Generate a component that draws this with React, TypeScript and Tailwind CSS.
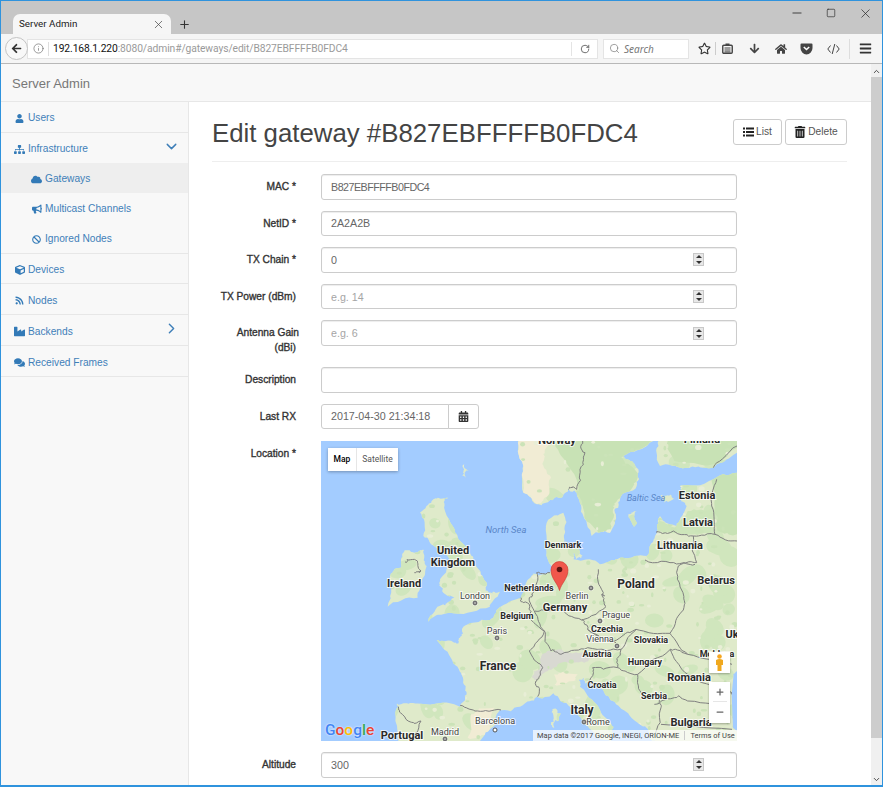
import React from 'react';
import { FaUser, FaSitemap, FaCloud, FaBullhorn, FaBan, FaCube, FaRss, FaIndustry, FaComments, FaTrashAlt, FaCalendarAlt, FaArrowLeft, FaRegStar, FaArrowDown, FaHome, FaBars } from 'react-icons/fa';
import { ChevronDown, ChevronRight, Info, RotateCw, Search, X, Plus, Minus, Square, ChevronUp } from 'lucide-react';

const sans = "font-['Liberation_Sans',Arial,sans-serif]";

function NavItem({ icon, label, chevron, sub, active, short }: { icon: React.ReactNode; label: string; chevron?: React.ReactNode; sub?: boolean; active?: boolean; short?: boolean }) {
  return (
    <div className={`flex items-center pt-[2px] text-[10.2px] text-[#3f7fb8] ${short ? 'h-[29px]' : 'h-[30px]'} ${sub ? 'pl-[30px]' : 'pl-[13px]'} ${active ? 'bg-[#eeeeee]' : ''}`}>
      <span className="mr-[3px] flex w-[11px] justify-center text-[#337ab7]">{icon}</span>
      <span>{label}</span>
      {chevron && <span className="ml-auto mr-[8px] -mt-[6px]">{chevron}</span>}
    </div>
  );
}

function Spinner() {
  return (
    <div className="mr-[32px] flex h-[13px] w-[11px] shrink-0 flex-col justify-between border border-[#c8c8c8] bg-[#e8e8e8]">
      <div className="flex h-[5px] items-center justify-center"><div className="h-0 w-0 border-x-[3px] border-b-[3px] border-x-transparent border-b-[#333]" /></div>
      <div className="flex h-[5px] items-center justify-center"><div className="h-0 w-0 border-x-[3px] border-t-[3px] border-x-transparent border-t-[#333]" /></div>
    </div>
  );
}

function Row({ label, second, wide, children }: { label: string; second?: string; wide?: boolean; children: React.ReactNode }) {
  return (
    <div className={`flex ${wide ? 'mb-[12px]' : 'mb-[11px]'} ${second ? 'h-[35.6px]' : 'min-h-[25.6px]'}`}>
      <label className="mr-[25px] w-[84px] shrink-0 pt-[5px] text-right text-[10.2px] leading-[15px] text-[#333] [-webkit-text-stroke:0.35px_#333]">
        <span className={`block whitespace-nowrap ${second ? '-mr-[3px]' : ''}`}>{label}</span>
        {second && <span className="block">{second}</span>}
      </label>
      {children}
    </div>
  );
}

function Field({ value, placeholder, spin, tight }: { value?: string; placeholder?: string; spin?: boolean; tight?: boolean }) {
  return (
    <div className="flex h-[25.6px] w-[416px] items-center rounded-[3px] border border-[#cccccc] bg-white pl-[9px] shadow-[inset_0_1px_1px_rgba(0,0,0,0.075)]">
      <input readOnly value={value ?? ''} placeholder={placeholder} className={`min-w-0 flex-1 bg-transparent text-[10.7px] text-[#666] outline-none placeholder:text-[#a5a5a5] ${tight ? 'tracking-[-0.5px]' : ''}`} />
      {spin && <Spinner />}
    </div>
  );
}

const labels: [string, number, number, number, boolean][] = [
  ['Norway', 236, 3, 11, true], ['Finland', 381, 2, 11, true],
  ['Estonia', 376, 58, 11, true], ['Latvia', 377, 85, 11, true], ['Lithuania', 359, 108, 11, true],
  ['Denmark', 242, 107, 9, true], ['United', 132, 113, 11, true], ['Kingdom', 132, 125, 11, true],
  ['Ireland', 83, 146, 11, true], ['Netherlands', 208, 150, 9, true], ['Poland', 315, 147, 12, true],
  ['Belarus', 395, 143, 11, true], ['London', 154, 158, 9, false], ['Berlin', 256, 158, 9, false],
  ['Germany', 244, 170, 11, true], ['Prague', 295, 177, 9, false], ['Belgium', 196, 178, 9, true],
  ['Czechia', 286, 191, 9, true], ['Paris', 176, 193, 9, false], ['Vienna', 279, 201, 9, false],
  ['Slovakia', 330, 202, 9, true], ['Uk', 411, 197, 11, true], ['Moldova', 396, 216, 9, true], ['Austria', 276, 216, 9, true],
  ['Hungary', 324, 224, 9, true], ['France', 177, 229, 12, true], ['Romania', 368, 240, 11, true],
  ['Croatia', 281, 247, 9, true], ['Serbia', 333, 258, 9, true], ['Italy', 261, 273, 12, true],
  ['Barcelona', 174, 283, 9, false], ['Bulgaria', 370, 285, 11, true], ['Rome', 277, 284, 9, false],
  ['Madrid', 124, 294, 9, false], ['Portugal', 81, 298, 11, true],
];

const dots: [number, number][] = [[154, 162], [270, 147], [176, 197], [279, 180], [296, 205], [263, 281], [124, 298]];

function makeRand(seed: number) {
  let s = seed;
  return () => {
    s = (s * 16807) % 2147483647;
    return s / 2147483647;
  };
}

// Adds small irregularities between the traced points, so coasts and borders look natural.
function rough(points: string, seed: number, amp: number, closed: boolean) {
  const rand = makeRand(seed);
  let pts = points.trim().split(/\s+/).map((p) => p.split(',').map(Number));
  let a = amp;
  for (let round = 0; round < 3; round++) {
    const next: number[][] = [];
    for (let i = 0; i < pts.length; i++) {
      const p = pts[i];
      next.push(p);
      const q = pts[i + 1] ?? (closed ? pts[0] : null);
      if (q) {
        const onEdge = (p[0] === q[0] && (p[0] === 0 || p[0] === 1248)) || (p[1] === q[1] && (p[1] === 0 || p[1] === 900));
        next.push(onEdge ? [(p[0] + q[0]) / 2, (p[1] + q[1]) / 2] : [(p[0] + q[0]) / 2 + (rand() - 0.5) * a, (p[1] + q[1]) / 2 + (rand() - 0.5) * a]);
      }
    }
    pts = next;
    a *= 0.55;
  }
  return pts.map((p) => p.map((n) => n.toFixed(1)).join(',')).join(' ');
}

const landShapes = [
  '232,797 240,790 300,788 417,797 437,757 427,717 397,667 347,597 400,605 417,590 427,557 507,537 527,507 600,470 637,400 687,395 677,335 677,245 727,215 732,275 742,315 757,355 837,370 897,350 977,345 1002,285 1017,225 1067,255 1097,195 1077,160 1077,135 1177,115 1248,95 1248,900 1000,900 985,885 950,845 885,790 850,755 797,725 787,712 777,737 837,807 877,857 870,900 830,890 787,845 737,787 697,757 647,767 597,797 537,807 517,857 477,900 232,900',
  '592,0 607,75 607,155 647,190 697,175 742,145 767,150 787,225 812,285 867,275 882,215 897,175 947,135 952,85 907,45 997,0',
  '1012,0 1017,75 1097,80 1177,80 1248,35 1248,0',
  '932,215 948,210 945,240 935,260 930,240',
  '755,320 775,315 785,345 765,355 750,340',
  '1020,165 1050,160 1060,175 1030,185',
  '430,70 445,90 435,110 428,90',
  '337,175 382,170 372,210 412,295 457,355 497,425 507,455 537,452 507,497 397,517 322,542 367,490 400,470 367,455 357,415 387,355 330,310 307,285 297,215',
  '250,330 280,335 307,335 317,375 297,435 290,470 200,497 207,405 240,380',
  '695,815 710,810 712,840 700,860 690,845',
].map((s, i) => rough(s, 101 + i * 37, 18, true));

const borders = [
  '785,0 792,35 777,85 767,145 742,145',
  '1248,15 1177,80',
  '1187,115 1172,195 1182,280 1248,300',
  '1007,275 1057,270 1117,285 1182,280',
  '1117,285 1127,365 1072,375',
  '972,357 1047,365 1122,370',
  '1072,375 1082,447 1087,507 1047,577 1100,640 1233,670',
  '832,385 847,455 842,460 855,497 782,537 800,565 880,600 945,565 1047,577',
  '687,395 647,395 637,455 625,470 640,510 670,570 625,630 665,680 645,720 650,767',
  '600,470 625,490 620,530 670,570',
  '640,510 720,500 782,537',
  '670,570 690,630 720,640 800,620 900,625 945,565',
  '800,565 885,605',
  '900,625 890,680 815,680 800,725',
  '890,680 950,700 1048,625 1100,640',
  '950,700 970,770 1010,760 1020,800 1000,880',
  '1048,625 1100,700 1220,750 1233,760',
  '1000,790 1060,770 1100,780 1220,780',
  '1020,850 1233,865',
  '417,795 470,810 540,807',
  '232,797 255,835 300,840 270,900',
  '252,363 280,355 300,390 280,395',
].map((s, i) => rough(s, 501 + i * 53, 16, false));

function blobs(count: number, seed: number, rMin: number, rMax: number) {
  const rand = makeRand(seed);
  const out: { x: number; y: number; rx: number; ry: number; a: number }[] = [];
  for (let i = 0; i < count; i++) {
    out.push({ x: rand() * 1248, y: rand() * 900, rx: rMin + rand() * (rMax - rMin), ry: rMin + rand() * (rMax - rMin) * 0.7, a: rand() * 180 });
  }
  return out;
}

const greenBig = blobs(130, 7919, 14, 42);
const greenSmall = blobs(360, 104729, 3, 10);
const paleSmall = blobs(150, 1299709, 3, 10);

const patches: [string, string][] = [
  ['#c8e2b5', '610,0 700,0 760,100 790,230 830,280 870,260 880,200 900,170 940,130 945,90 900,50 990,0'],
  ['#c8e2b5', '1040,0 1060,60 1177,70 1248,20 1248,0'],
  ['#c8e2b5', '1170,110 1248,95 1248,280 1190,270 1180,190'],
  ['#cde5ba', '1015,235 1060,260 1100,210 1170,200 1170,270 1120,280 1010,270'],
  ['#f1ecd4', '592,0 607,75 607,155 647,190 675,170 690,110 670,50 690,0'],
  ['#d9d9d2', '660,650 720,625 810,640 790,665 720,665 680,690 650,720 640,690'],
  ['#f1ecd4', '450,820 520,800 500,880 440,890'],
  ['#f1ecd4', '700,700 770,700 760,720 700,730'],
];

function EuropeMap() {
  return (
    <svg viewBox="0 0 416 300" className="absolute inset-0 h-full w-full">
      <defs>
        <clipPath id="land">
          {landShapes.map((p) => <polygon key={p} points={p} transform="scale(0.33333)" />)}
        </clipPath>
      </defs>
      <rect width="416" height="300" fill="#a3ccff" />
      <g transform="scale(0.33333)">
        {landShapes.map((p) => <polygon key={p} points={p} fill="#dfeaca" />)}
      </g>
      <g clipPath="url(#land)">
        <g transform="scale(0.33333)">
          {greenBig.map((b, i) => <ellipse key={i} cx={b.x} cy={b.y} rx={b.rx} ry={b.ry} transform={`rotate(${b.a} ${b.x} ${b.y})`} fill="#d0e6bd" />)}
          {patches.map(([c, p]) => <polygon key={p} points={rough(p, 313, 22, true)} fill={c} />)}
          {greenSmall.map((b, i) => <ellipse key={i} cx={b.x} cy={b.y} rx={b.rx} ry={b.ry} fill="#cbe3b8" />)}
          {paleSmall.map((b, i) => <ellipse key={i} cx={b.x} cy={b.y} rx={b.rx} ry={b.ry} fill="#e8eed6" />)}
          <polygon points="1248,690 1238,700 1232,760 1236,860 1248,870" fill="#a3ccff" />
        </g>
      </g>
      <g transform="scale(0.33333)">
        {borders.map((b) => (
          <polyline key={b} points={b} fill="none" stroke="#808080" strokeWidth="3" />
        ))}
      </g>
      <text x="185" y="92" textAnchor="middle" fontSize="9.5" fontStyle="italic" fill="#5a86c8" fontFamily="Roboto, sans-serif">North Sea</text>
      <text x="325" y="60" textAnchor="middle" fontSize="9" fontStyle="italic" fill="#5a86c8" fontFamily="Roboto, sans-serif">Baltic Sea</text>
      {labels.map(([t, x, y, s, b]) => (
        <text key={t} x={x} y={y} textAnchor="middle" fontSize={s} fontWeight={b ? 700 : 400} fill={b ? '#2a2a2a' : '#444'} fontFamily="Roboto, sans-serif" stroke="#ffffff" strokeWidth="2" strokeOpacity="0.75" paintOrder="stroke">{t}</text>
      ))}
      {dots.map(([x, y]) => (
        <g key={`${x}-${y}`}>
          <circle cx={x} cy={y} r="2.6" fill="#fff" />
          <circle cx={x} cy={y} r="1.9" fill="none" stroke="#333" strokeWidth="0.9" />
          <circle cx={x} cy={y} r="0.8" fill="#333" />
        </g>
      ))}
      <circle cx="174" cy="289" r="2" fill="#fff" stroke="#444" strokeWidth="0.9" />
      <path d="M238.5 149.5 C236.5 142 230 137.5 230 129 A8.4 8.4 0 0 1 247 129 C247 137.5 240.5 142 238.5 149.5 Z" fill="#f0574c" stroke="#c9352b" strokeWidth="0.6" />
      <circle cx="238.5" cy="128.5" r="2.8" fill="#5e1512" />
    </svg>
  );
}

export default function App() {
  return (
    <div className={`${sans} flex h-[787px] w-[883px] flex-col overflow-hidden border border-b-2 border-[#2f93dd] bg-white`}>
      {/* title bar */}
      <div className="flex h-[33px] shrink-0 bg-[#c6c6c6]">
        <div className="ml-[12px] mt-[13px] flex h-[21px] w-[158px] items-center justify-between rounded-t-[7px] bg-[#f6f6f6] pl-[6px] pr-[6px]">
          <span className="font-['Roboto',sans-serif] text-[9.8px] text-[#222]">Server Admin</span>
          <X size={13} strokeWidth={1.3} className="text-[#444]" />
        </div>
        <Plus size={13} strokeWidth={2} className="ml-[7px] mt-[17px] text-[#333]" />
        <div className="ml-auto flex h-[24px] items-center text-[#222]">
          <Minus size={14} strokeWidth={1.4} />
          <Square size={10} strokeWidth={1.5} className="ml-[22px]" />
          <X size={15} strokeWidth={1.1} className="ml-[22px] mr-[9px]" />
        </div>
      </div>
      {/* toolbar */}
      <div className="flex h-[30px] shrink-0 items-center border-b border-[#b8b8b8] bg-[#f5f5f5] text-[#444]">
        <div className="z-10 ml-[4px] flex h-[23px] w-[23px] items-center justify-center rounded-full border border-[#c4c4c4] bg-[#f8f8f8]">
          <FaArrowLeft size={11} className="text-[#333]" />
        </div>
        <div className="-ml-[1px] flex h-[20px] w-[571px] items-center border border-[#e4e4e4] bg-white">
          <Info size={11} strokeWidth={1.4} className="ml-[5px] text-[#666]" />
          <div className="ml-[4px] h-[14px] w-px bg-[#ddd]" />
          <span className="ml-[4px] pt-[1px] font-['Roboto',sans-serif] text-[10.3px] tracking-[-0.1px] text-[#9a9a9a]"><span className="text-[#111]">192.168.1.220</span>:8080/admin#/gateways/edit/B827EBFFFFB0FDC4</span>
          <div className="ml-auto h-[14px] w-px bg-[#e4e4e4]" />
          <RotateCw size={10} strokeWidth={2} className="ml-[8px] mr-[7px] text-[#555]" />
        </div>
        <div className="ml-[5px] flex h-[20px] w-[86px] items-center border border-[#e4e4e4] bg-white">
          <Search size={11} strokeWidth={1.5} className="ml-[5px] text-[#777]" />
          <span className="ml-[4px] pt-[1px] font-['Noto_Sans',sans-serif] text-[10px] italic text-[#777]">Search</span>
        </div>
        <FaRegStar size={13} className="ml-[9px] text-[#333]" />
        <div className="ml-[4px] h-[13px] w-px bg-[#ccc]" />
        <svg width="11" height="11" viewBox="0 0 11 11" className="ml-[6px]"><rect x="0.75" y="2.25" width="9.5" height="8" rx="1" fill="none" stroke="#444" strokeWidth="1.4" /><rect x="3.5" y="0.5" width="4" height="2.5" fill="#444" /><path d="M2.5 5H8.5M2.5 7H8.5M2.5 8.9H8.5" stroke="#444" strokeWidth="1" /></svg>
        <FaArrowDown size={11} className="ml-[16px] text-[#444]" />
        <FaHome size={12} className="ml-[15px] text-[#444]" />
        <svg width="13" height="12" viewBox="0 0 13 12" className="ml-[13px]"><path d="M0.5 1.5 A1 1 0 0 1 1.5 .5 H11.5 A1 1 0 0 1 12.5 1.5 V5 A6 6.5 0 0 1 .5 5 Z" fill="#444" /><path d="M3.8 4 L6.5 6.5 L9.2 4" fill="none" stroke="#fff" strokeWidth="1.6" /></svg>
        <svg width="13" height="12" viewBox="0 0 13 12" className="ml-[14px]"><path d="M3.5 2.5 L0.8 6 L3.5 9.5 M9.5 2.5 L12.2 6 L9.5 9.5 M7.8 1 L5.2 11" fill="none" stroke="#444" strokeWidth="1" /></svg>
        <div className="ml-[9px] h-[20px] w-px bg-[#ddd]" />
        <FaBars size={13} className="ml-[9px] text-[#333]" />
      </div>
      {/* page */}
      <div className="flex min-h-0 flex-1">
        <div className="flex min-w-0 flex-1 flex-col">
          <div className="flex h-[38px] shrink-0 items-center border-b border-[#e7e7e7] bg-[#f8f8f8] pl-[11px] pt-[2px] text-[13px] text-[#777]">Server Admin</div>
          <div className="flex min-h-0 flex-1">
            {/* sidebar */}
            <div className="w-[188px] shrink-0 border-r border-[#e7e7e7] bg-[#f8f8f8]">
              <div className="border-b border-[#e7e7e7]"><NavItem icon={<FaUser size={9} />} label="Users" /></div>
              <div className="border-b border-[#e7e7e7]">
                <NavItem icon={<FaSitemap size={11} />} label="Infrastructure" chevron={<ChevronDown size={17} strokeWidth={2} />} />
                <NavItem sub active icon={<FaCloud size={11} />} label="Gateways" />
                <NavItem sub icon={<FaBullhorn size={10} />} label="Multicast Channels" />
                <NavItem sub icon={<FaBan size={9} />} label="Ignored Nodes" />
              </div>
              <div className="border-b border-[#e7e7e7]"><NavItem short icon={<FaCube size={10} />} label="Devices" /></div>
              <div className="border-b border-[#e7e7e7] pt-[1px]"><NavItem short icon={<FaRss size={9} />} label="Nodes" /></div>
              <div className="border-b border-[#e7e7e7] pt-[1px]"><NavItem short icon={<FaIndustry size={11} />} label="Backends" chevron={<ChevronRight size={17} strokeWidth={2} />} /></div>
              <div className="border-b border-[#e7e7e7] pt-[1px]"><NavItem short icon={<FaComments size={11} />} label="Received Frames" /></div>
            </div>
            {/* main */}
            <div className="min-w-0 flex-1 pl-[23px] pr-[24px]">
              <div className="mt-[17px] flex h-[43px] items-start justify-between border-b border-[#eeeeee]">
                <h1 className="-mt-[1px] text-[25.8px] leading-[30px] text-[#444]">Edit gateway #B827EBFFFFB0FDC4</h1>
                <div className="flex gap-[3px]">
                  <button className="flex h-[26px] w-[49px] items-center justify-center gap-[2px] rounded-[3px] border border-[#cccccc] bg-white text-[10.2px] text-[#555]">
                    <svg width="11" height="10" viewBox="0 0 11 10"><path d="M0 0.5H2V2.5H0ZM0 4H2V6H0ZM0 7.5H2V9.5H0ZM3 0.5H11V2.5H3ZM3 4H11V6H3ZM3 7.5H11V9.5H3Z" fill="#222" /></svg>
                    List
                  </button>
                  <button className="flex h-[26px] w-[62px] items-center justify-center gap-[2px] rounded-[3px] border border-[#cccccc] bg-white text-[10.2px] text-[#555]"><FaTrashAlt size={12} className="text-[#222]" />Delete</button>
                </div>
              </div>
              <div className="mt-[12px]">
                <Row label="MAC *"><Field tight value="B827EBFFFFB0FDC4" /></Row>
                <Row label="NetID *"><Field value="2A2A2B" /></Row>
                <Row label="TX Chain *"><Field value="0" spin /></Row>
                <Row label="TX Power (dBm)"><Field placeholder="e.g. 14" spin /></Row>
                <Row label="Antenna Gain" second="(dBi)"><Field placeholder="e.g. 6" spin /></Row>
                <Row label="Description"><Field /></Row>
                <Row label="Last RX" wide>
                  <div className="flex h-[25.6px]">
                    <div className="flex w-[128px] items-center rounded-l-[3px] border border-[#cccccc] bg-white pl-[9px] text-[10.7px] text-[#666]">2017-04-30 21:34:18</div>
                    <div className="-ml-px flex w-[31px] items-center justify-center rounded-r-[3px] border border-[#cccccc] bg-white text-[#333]"><FaCalendarAlt size={11} /></div>
                  </div>
                </Row>
                <Row label="Location *">
                  <div className="relative h-[300px] w-[416px] overflow-hidden">
                    <EuropeMap />
                    <div className="absolute left-[7px] top-[7px] flex h-[23px] items-center bg-white font-['Roboto',sans-serif] text-[8.5px] shadow-[0_1px_3px_rgba(0,0,0,0.3)]">
                      <span className="flex h-full w-[29px] items-center justify-center border-r border-[#e6e6e6] font-medium text-black">Map</span>
                      <span className="flex h-full w-[41px] items-center justify-center text-[#555]">Satellite</span>
                    </div>
                    <div className="absolute left-[388px] top-[211px] flex h-[21px] w-[21px] items-center justify-center bg-white shadow-[0_1px_2px_rgba(0,0,0,0.3)]">
                      <svg width="9" height="17" viewBox="0 0 9 17"><circle cx="4.5" cy="2.5" r="2.3" fill="#f5a623" /><path d="M1 6 Q4.5 4 8 6 V11 H6.5 V17 H2.5 V11 H1 Z" fill="#f0a81e" /></svg>
                    </div>
                    <div className="absolute left-[388px] top-[241px] flex h-[41px] w-[21px] flex-col items-center bg-white text-[#666] shadow-[0_1px_2px_rgba(0,0,0,0.3)]">
                      <div className="flex h-[20px] w-[14px] items-center justify-center border-b border-[#e6e6e6]"><Plus size={10} strokeWidth={3} /></div>
                      <div className="flex h-[20px] w-[14px] items-center justify-center"><Minus size={10} strokeWidth={3} /></div>
                    </div>
                    <div className="absolute left-[4px] top-[280px] font-['Roboto',sans-serif] text-[15.5px] font-medium leading-[18px] [text-shadow:0_0_2px_#fff]">
                      <span className="text-[#4285f4]">G</span><span className="text-[#ea4335]">o</span><span className="text-[#fbbc05]">o</span><span className="text-[#4285f4]">g</span><span className="text-[#34a853]">l</span><span className="text-[#ea4335]">e</span>
                    </div>
                    <div className="absolute bottom-0 right-0 flex h-[11px] w-[204px] items-center gap-[5px] whitespace-nowrap bg-white/70 pl-[4px] font-['Roboto',sans-serif] text-[7.5px] text-[#444]">
                      <span>Map data ©2017 Google, INEGI, ORION-ME</span><span className="h-[9px] w-px bg-[#ccc]" /><span>Terms of Use</span>
                    </div>
                  </div>
                </Row>
                <Row label="Altitude"><Field value="300" spin /></Row>
              </div>
            </div>
          </div>
        </div>
        {/* scrollbar */}
        <div className="flex w-[11px] shrink-0 flex-col items-center bg-[#f0f0f0]">
          <ChevronUp size={9} strokeWidth={2.5} className="mt-[3px] text-[#444]" />
          <div className="mt-[1px] h-[661px] w-full bg-[#cdcdcd]" />
          <ChevronDown size={9} strokeWidth={2.5} className="mt-auto mb-[1px] text-[#444]" />
        </div>
      </div>
    </div>
  );
}
